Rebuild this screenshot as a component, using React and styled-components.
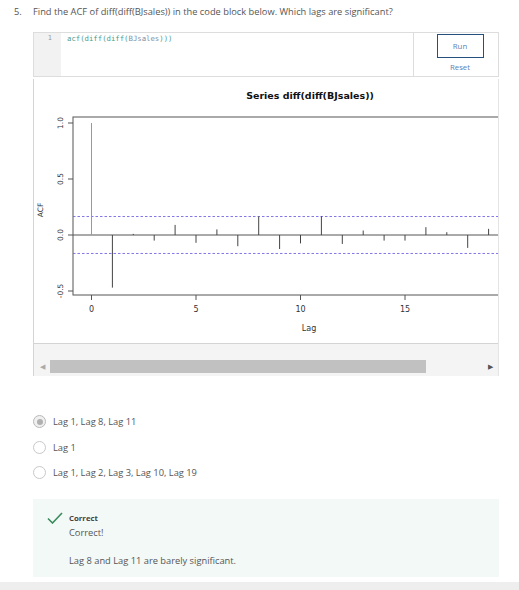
import styled, { createGlobalStyle } from "styled-components";

const GlobalStyle = createGlobalStyle`
  body {
    margin: 0;
    padding: 0;
    font-family: "Open Sans", "Liberation Sans", sans-serif;
    color: #444;
    background: #fff;
  }
  * {
    box-sizing: border-box;
  }
`;

const Page = styled.div`
  width: 519px;
  height: 590px;
  padding-top: 6px;
  position: relative;
  overflow: hidden;
`;

const Question = styled.div`
  display: flex;
  font-size: 9.3px;
  line-height: 12px;
  color: #555;
`;

const QNumber = styled.span`
  width: 33px;
  padding-left: 14px;
`;

const Body = styled.div`
  margin-left: 33px;
  width: 466px;
`;

const CodeBlock = styled.div`
  display: flex;
  height: 45px;
  margin-top: 14px;
  border: 1px solid #ddd;
`;

const Gutter = styled.div`
  width: 27px;
  background: #f2f2f2;
  color: #999;
  font-family: "DejaVu Sans Mono", monospace;
  font-size: 7px;
  text-align: right;
  padding: 1px 9px 0 0;
  line-height: 9px;
`;

const Editor = styled.div`
  flex: 1;
  padding: 1px 0 0 6px;
  font-family: "DejaVu Sans Mono", monospace;
  font-size: 7.3px;
  line-height: 9px;
`;

const Tok = styled.span`
  color: ${(p) => (p.kind === "var" ? "#7d8fa6" : "#4f9c8c")};
`;

const Side = styled.div`
  width: 85px;
  border-left: 1px solid #ddd;
  display: flex;
  flex-direction: column;
  align-items: center;
  padding-top: 1px;
`;

const RunButton = styled.button`
  width: 47px;
  height: 24px;
  border: 1.5px solid #25507e;
  background: #fff;
  color: #5b82b8;
  font-family: inherit;
  font-size: 7.8px;
  padding: 0;
  margin-left: 8px;
`;

const ResetLink = styled.span`
  margin-top: 4px;
  margin-left: 8px;
  color: #5b82b8;
  font-size: 7.8px;
  line-height: 10px;
`;

const Output = styled.div`
  margin-top: 2px;
  border-left: 1px solid #d4d4d4;
  border-right: 1px solid #e4e4e4;
  background: #f4f4f4;
`;

const Viewport = styled.div`
  height: 265px;
  overflow: hidden;
  background: #fff;
  border-bottom: 1px solid #d4d4d4;
`;

const ScrollStrip = styled.div`
  height: 32px;
  padding-top: 16px;
`;

const ScrollBar = styled.div`
  display: flex;
  align-items: center;
  height: 13px;
`;

const Arrow = styled.span`
  width: 16px;
  display: flex;
  justify-content: center;
  font-size: 7px;
  color: ${(p) => (p.dim ? "#aaa" : "#555")};
`;

const Track = styled.div`
  flex: 1;
  height: 13px;
`;

const Thumb = styled.div`
  height: 13px;
  background: #c1c1c1;
`;

const Options = styled.div`
  margin-top: 39px;
  display: flex;
  flex-direction: column;
  gap: 12.5px;
`;

const Option = styled.label`
  display: flex;
  align-items: center;
  gap: 7px;
  font-size: 9.3px;
  line-height: 13px;
  color: #555;
`;

const Radio = styled.span`
  width: 13px;
  height: 13px;
  border-radius: 50%;
  border: 1px solid ${(p) => (p.checked ? "#b8b8b8" : "#c8c8c8")};
  background: ${(p) => (p.checked ? "#f0f0f0" : "#fff")};
  display: flex;
  align-items: center;
  justify-content: center;

  &::after {
    content: "";
    width: 6px;
    height: 6px;
    border-radius: 50%;
    background: ${(p) => (p.checked ? "#b0b0b0" : "transparent")};
  }
`;

const Feedback = styled.div`
  margin-top: 20px;
  height: 78px;
  background: #f3f9f7;
  display: flex;
  padding: 13px 0 0 14px;
  gap: 6px;
`;

const FeedbackText = styled.div`
  display: flex;
  flex-direction: column;
  font-size: 9.3px;
  color: #555;
  line-height: 18px;
`;

const FeedbackTitle = styled.span`
  font-weight: 700;
  font-size: 7.8px;
  line-height: 12px;
  color: #444;
`;

const Note = styled.span`
  margin-top: 12px;
  line-height: 14px;
`;

const BottomBar = styled.div`
  position: absolute;
  left: 0;
  right: 0;
  bottom: 0;
  height: 8px;
  background: #eeeeee;
`;

const acf = [
  1.0, -0.47, 0.01, -0.05, 0.09, -0.07, 0.05, -0.1, 0.165, -0.125, -0.075,
  0.168, -0.08, 0.04, -0.05, -0.05, 0.07, 0.025, -0.115, 0.055,
];

const X0 = 91;
const DX = 20.9;
const Y0 = 235;
const SY = 112;
const lx = (lag) => X0 + lag * DX;
const vy = (v) => Y0 - v * SY;

function AcfPlot() {
  const left = 73;
  const right = 502;
  const top = 117;
  const bottom = 295;
  const font = "DejaVu Sans, sans-serif";
  return (
    <svg width="545" height="265" style={{ display: "block" }}>
      <g transform="translate(-34 -79)" fontFamily={font} fill="#333">
        <text x="310" y="99" fontSize="9.5" fontWeight="700" textAnchor="middle" fill="#111">
          Series  diff(diff(BJsales))
        </text>
        <rect x={left} y={top} width={right - left} height={bottom - top} fill="none" stroke="#555" strokeWidth="1" />
        <line x1={left} x2={right} y1={Y0} y2={Y0} stroke="#555" />
        <line x1={left} x2={right} y1={vy(0.165)} y2={vy(0.165)} stroke="#7466e6" strokeDasharray="2.5 2" strokeWidth="0.9" />
        <line x1={left} x2={right} y1={vy(-0.165)} y2={vy(-0.165)} stroke="#7466e6" strokeDasharray="2.5 2" strokeWidth="0.9" />
        {acf.map((v, i) => (
          <line key={i} x1={lx(i) + 0.5} x2={lx(i) + 0.5} y1={Y0} y2={vy(v)} stroke={i === 0 ? "#999" : "#444"} strokeWidth="1" />
        ))}
        {[1, 0.5, 0, -0.5].map((v) => (
          <g key={v}>
            <line x1={left - 5} x2={left} y1={vy(v)} y2={vy(v)} stroke="#555" />
            <text
              transform={`translate(63 ${vy(v)}) rotate(-90)`}
              fontSize="7.5"
              textAnchor="middle"
            >
              {v === 0 ? "0.0" : v.toFixed(1)}
            </text>
          </g>
        ))}
        <text transform="translate(43 210) rotate(-90)" fontSize="7.5" textAnchor="middle">
          ACF
        </text>
        {[0, 5, 10, 15].map((l) => (
          <g key={l}>
            <line x1={lx(l) + 0.5} x2={lx(l) + 0.5} y1={bottom} y2={bottom + 5} stroke="#555" />
            <text x={lx(l) + 0.5} y="312" fontSize="8" textAnchor="middle">
              {l}
            </text>
          </g>
        ))}
        <text x="309" y="331" fontSize="8" textAnchor="middle">
          Lag
        </text>
      </g>
    </svg>
  );
}

function CheckIcon() {
  return (
    <svg width="16" height="12" viewBox="0 0 16 12">
      <path d="M1 6.5 L5.5 11 L15 1" fill="none" stroke="#3a8a5e" strokeWidth="1.6" />
    </svg>
  );
}

const options = [
  { label: "Lag 1, Lag 8, Lag 11", checked: true },
  { label: "Lag 1", checked: false },
  { label: "Lag 1, Lag 2, Lag 3, Lag 10, Lag 19", checked: false },
];

export default function App() {
  return (
    <>
      <GlobalStyle />
      <Page>
        <Question>
          <QNumber>5.</QNumber>
          <span>Find the ACF of diff(diff(BJsales)) in the code block below. Which lags are significant?</span>
        </Question>
        <Body>
          <CodeBlock>
            <Gutter>1</Gutter>
            <Editor>
              <Tok>acf(diff(diff(</Tok>
              <Tok kind="var">BJsales</Tok>
              <Tok>)))</Tok>
            </Editor>
            <Side>
              <RunButton>Run</RunButton>
              <ResetLink>Reset</ResetLink>
            </Side>
          </CodeBlock>
          <Output>
            <Viewport>
              <AcfPlot />
            </Viewport>
            <ScrollStrip>
              <ScrollBar>
                <Arrow dim>◀</Arrow>
                <Track>
                  <Thumb style={{ width: `${(376 / 432) * 100}%` }} />
                </Track>
                <Arrow>▶</Arrow>
              </ScrollBar>
            </ScrollStrip>
          </Output>
          <Options>
            {options.map((o) => (
              <Option key={o.label}>
                <Radio checked={o.checked} />
                {o.label}
              </Option>
            ))}
          </Options>
          <Feedback>
            <CheckIcon />
            <FeedbackText>
              <FeedbackTitle>Correct</FeedbackTitle>
              <span>Correct!</span>
              <Note>Lag 8 and Lag 11 are barely significant.</Note>
            </FeedbackText>
          </Feedback>
        </Body>
        <BottomBar />
      </Page>
    </>
  );
}
